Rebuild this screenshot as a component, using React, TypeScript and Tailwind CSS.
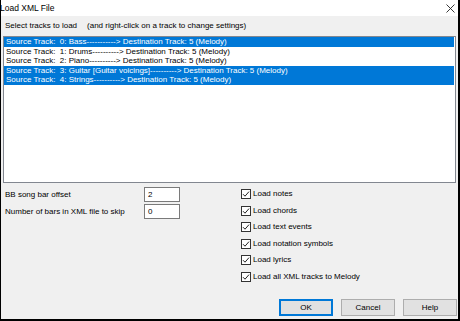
const tracks = [
  { text: "Source Track:  0: Bass-----------> Destination Track: 5 (Melody)", selected: true },
  { text: "Source Track:  1: Drums----------> Destination Track: 5 (Melody)", selected: false },
  { text: "Source Track:  2: Piano----------> Destination Track: 5 (Melody)", selected: false },
  { text: "Source Track:  3: Guitar [Guitar voicings]----------> Destination Track: 5 (Melody)", selected: true },
  { text: "Source Track:  4: Strings----------> Destination Track: 5 (Melody)", selected: true },
];

const options = [
  "Load notes",
  "Load chords",
  "Load text events",
  "Load notation symbols",
  "Load lyrics",
  "Load all XML tracks to Melody",
];

const CheckBox = () => (
  <svg width="10" height="10" viewBox="0 0 10 10" className="shrink-0">
    <rect x="0.5" y="0.5" width="9" height="9" fill="#fff" stroke="#333" />
    <path d="M2 5.2 L4 7.2 L8 2.6" fill="none" stroke="#222" strokeWidth="1" />
  </svg>
);

export default function App() {
  return (
    <div className="w-[460px] h-[321px] bg-[#f0f0f0] border-l border-r-2 border-b-2 border-black flex flex-col text-black font-['Liberation_Sans',Arial,sans-serif] text-[8px] leading-[10px]">
      {/* Title bar */}
      <div className="h-[16px] bg-white flex items-center justify-between shrink-0">
        <span className="text-[8.5px] -ml-[1px]">Load XML File</span>
        <svg width="9" height="9" viewBox="0 0 9 9" className="mr-[3px]">
          <path d="M0.5 0.5 L8.5 8.5 M8.5 0.5 L0.5 8.5" stroke="#222" strokeWidth="0.9" />
        </svg>
      </div>

      <div className="flex-1 flex flex-col px-[2px]">
        <div className="mt-[5px] pl-[2px] flex whitespace-pre">
          <span>Select tracks to load</span>
          <span className="ml-[10px]">(and right-click on a track to change settings)</span>
        </div>

        {/* Track list */}
        <div className="mt-[5px] h-[147px] border border-[#828790] bg-white pr-[1px]">
          {tracks.map((t, i) => (
            <div
              key={i}
              className={
                "h-[9.5px] leading-[9.5px] pl-[2px] whitespace-pre " +
                (t.selected ? "bg-[#0078d7] text-white" : "")
              }
            >
              {t.text}
            </div>
          ))}
        </div>

        <div className="flex-1 flex">
          {/* Offsets */}
          <div className="w-[238px] pt-[4px] flex flex-col gap-[2px]">
            <div className="flex items-center h-[15px]">
              <span className="w-[141px] pl-[2px]">BB song bar offset</span>
              <div className="w-[36px] h-[15px] border border-[#7a7a7a] bg-white pl-[3px] flex items-center">2</div>
            </div>
            <div className="flex items-center h-[15px]">
              <span className="w-[141px] pl-[2px]">Number of bars in XML file to skip</span>
              <div className="w-[36px] h-[15px] border border-[#7a7a7a] bg-white pl-[3px] flex items-center">0</div>
            </div>
          </div>

          {/* Load options */}
          <div className="pt-[3px] flex flex-col">
            {options.map((o) => (
              <div key={o} className="h-[16.5px] flex items-center gap-[2px]">
                <CheckBox />
                <span>{o}</span>
              </div>
            ))}
          </div>
        </div>

        {/* Buttons */}
        <div className="flex justify-end gap-[8px] pb-[3px] -mr-[1px]">
          <button className="w-[54px] h-[17px] bg-[#e1e1e1] border-2 border-[#0078d7]">OK</button>
          <button className="w-[54px] h-[17px] bg-[#e1e1e1] border border-[#adadad]">Cancel</button>
          <button className="w-[54px] h-[17px] bg-[#e1e1e1] border border-[#adadad]">Help</button>
        </div>
      </div>
    </div>
  );
}
